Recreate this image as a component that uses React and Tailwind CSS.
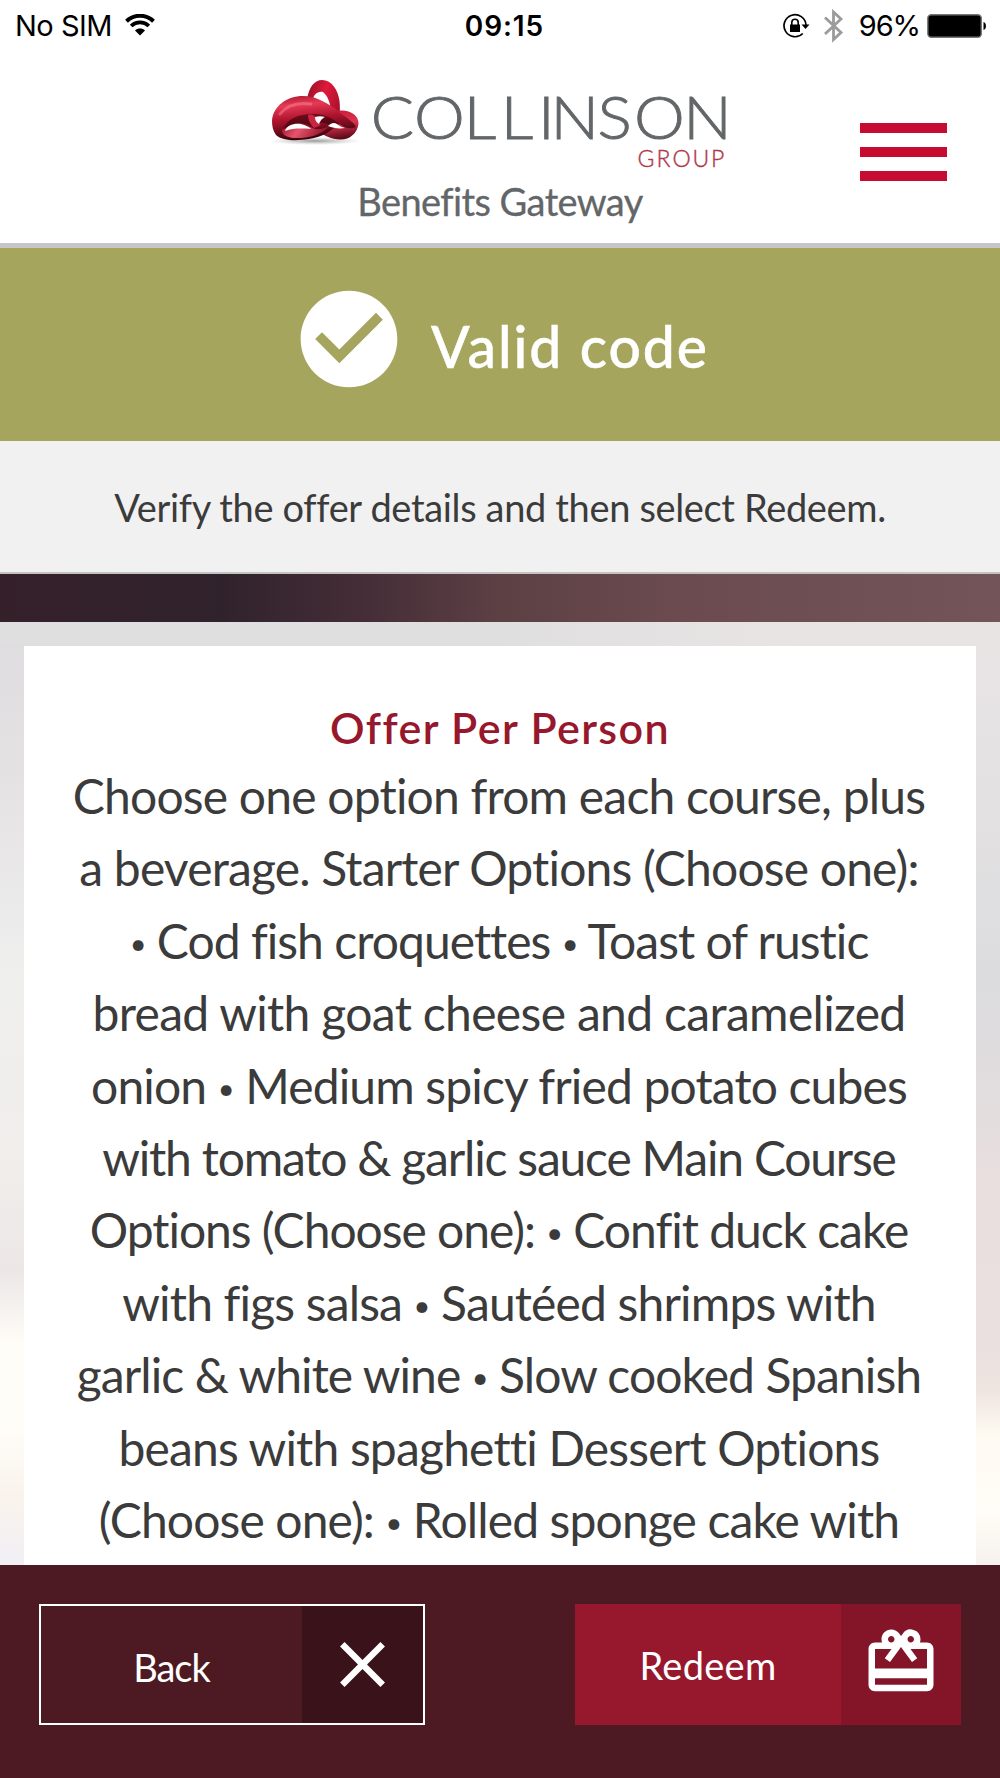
import { MdCheckCircle, MdClose, MdRedeem } from "react-icons/md";

// 1行ごとの文字間隔
const offerLines = [
  { text: "Choose one option from each course, plus", tracking: "tracking-[-0.80px]" },
  { text: "a beverage. Starter Options (Choose one):", tracking: "tracking-[-0.83px]" },
  { text: "• Cod fish croquettes • Toast of rustic", tracking: "tracking-[-0.97px]" },
  { text: "bread with goat cheese and caramelized", tracking: "tracking-[-0.67px]" },
  { text: "onion • Medium spicy fried potato cubes", tracking: "tracking-[-0.85px]" },
  { text: "with tomato & garlic sauce Main Course", tracking: "tracking-[-1.2px]" },
  { text: "Options (Choose one): • Confit duck cake", tracking: "tracking-[-1.03px]" },
  { text: "with figs salsa • Sautéed shrimps with", tracking: "tracking-[-0.84px]" },
  { text: "garlic & white wine • Slow cooked Spanish", tracking: "tracking-[-0.91px]" },
  { text: "beans with spaghetti Dessert Options", tracking: "tracking-[-0.82px]" },
  { text: "(Choose one): • Rolled sponge cake with", tracking: "tracking-[-0.87px]" },
];

const StatusBar = () => (
  <div className="h-[50px] shrink-0 grid grid-cols-3 items-center pl-[15px] pr-[13px] text-black text-[29px] leading-[50px] font-['Inter',sans-serif]">
    <div className="flex items-center gap-[13px]">
      <span className="pt-px tracking-[-0.5px]">No SIM</span>
      <svg width="30" height="22" viewBox="0 0 30 22" className="-mt-0.5" fill="none" stroke="#000">
        <path d="M1.5 7.2a19.5 19.5 0 0 1 27 0" strokeWidth="4" />
        <path d="M6.2 12a12.6 12.6 0 0 1 17.6 0" strokeWidth="3.8" />
        <path d="M15 21.5l-5-5c2.8-2.6 7.2-2.6 10 0z" fill="#000" stroke="none" />
      </svg>
    </div>
    <div className="pt-px pl-[7px] text-center font-semibold text-[28px] tracking-[0.9px]">09:15</div>
    <div className="flex items-center justify-end">
      <svg width="28" height="26" viewBox="0 0 28 26" fill="none" stroke="#000" strokeWidth="1.7">
        <path d="M20.8 20.5A11 11 0 1 1 24 12" />
        <path d="M19.5 11.5h8l-4 4.5z" fill="#000" stroke="none" />
        <rect x="8" y="11.5" width="10" height="7.5" fill="#000" stroke="none" />
        <path d="M9.8 12V9.5a3.2 3.2 0 0 1 6.4 0V12" strokeWidth="1.6" />
      </svg>
      <svg width="20" height="34" viewBox="0 0 20 34" className="ml-[14px] mr-[15px]" fill="none" stroke="#9b9b9b" strokeWidth="2.8">
        <path d="M1 8.5l16 15-7.5 7V3l7.5 7L1 25" />
      </svg>
      <span className="pt-px tracking-[-1.1px]">96%</span>
      <svg width="60" height="24" viewBox="0 0 60 24" className="ml-[7px]">
        <rect x="0.8" y="0.8" width="53.5" height="22.4" rx="3.5" fill="#000" stroke="#777" strokeWidth="1.4" />
        <path d="M56.5 8c3.3 1 3.3 7 0 8z" fill="#000" />
      </svg>
    </div>
  </div>
);

const Logo = () => (
  <svg width="464" height="100" viewBox="0 0 464 100" className="shrink-0 font-['Lato',sans-serif]">
    <defs>
      <linearGradient id="loop" x1="0" y1="0" x2="0.2" y2="1">
        <stop offset="0" stopColor="#a8132b" />
        <stop offset="0.25" stopColor="#e63a56" />
        <stop offset="0.55" stopColor="#b0142e" />
        <stop offset="1" stopColor="#3a040d" />
      </linearGradient>
      <linearGradient id="back" x1="0" y1="0" x2="1" y2="0.6">
        <stop offset="0" stopColor="#8a1024" />
        <stop offset="0.5" stopColor="#e0193a" />
        <stop offset="1" stopColor="#a5122b" />
      </linearGradient>
      <linearGradient id="lobe" x1="0.2" y1="0" x2="0.4" y2="1">
        <stop offset="0" stopColor="#c81c38" />
        <stop offset="0.5" stopColor="#d93550" />
        <stop offset="1" stopColor="#5c0918" />
      </linearGradient>
      <linearGradient id="inner" x1="0" y1="0" x2="1" y2="0.2">
        <stop offset="0" stopColor="#9c1229" />
        <stop offset="0.4" stopColor="#e4556c" />
        <stop offset="1" stopColor="#8c0f25" />
      </linearGradient>
      <radialGradient id="ground">
        <stop offset="0" stopColor="#555" stopOpacity="0.6" />
        <stop offset="1" stopColor="#999" stopOpacity="0" />
      </radialGradient>
    </defs>
    {/* 結び目のマーク */}
    <g transform="translate(-3 0)">
      <ellipse cx="50" cy="67" rx="46" ry="4" fill="url(#ground)" />
      <path
        fill="url(#back)"
        fillRule="evenodd"
        d="M42 26C44 12 50 6 57 6C67 6 73 16 74.5 27C75.500 37 75 45 70 52C62 60 46 58 44 46ZM48 24C50 19 54 17 58 18C63 22 65 29 66 36C60 31 54 27 48 24Z"
      />
      <path fill="url(#lobe)" d="M72 37C84 35 94 41 93.5 50C92 60 84 66 75 65.500C66 65 60 62 54 58L63 48Z" />
      <path
        fill="url(#loop)"
        d="M7 47C8 32 22 22 38 22C52 22 64 30 73 37C80 43 88 47 91 53C84 56 79 53 74 50C66 57 58 63 44 65C32 67 17 67 11 61C8 57 7 52 7 47Z"
      />
      <path fill="#3a040d" fillOpacity="0.65" d="M18 55C22 45 34 40 48 40C58 40 66 43 74 50L66 52C58 47 52 48 46 52C36 47 26 49 18 57Z" />
      <path fill="url(#inner)" d="M17 56C27 49 41 51 50 55C56 56 61 54 65 51C60 58 51 62 41 63.500C29 65 17 64 17 56Z" />
      <path fill="#fff" d="M20 57C22 51 29 49 36 50C41 51 44 53 46 55C37 54.500 28 54 20 57Z" />
      <path fill="#c92541" d="M43 41C46 40 48 41 50 42C51 46 53 49 56 51L49 54C45 50 43 46 43 41Z" />
      <path fill="#fff" d="M50 43C53 42 57 42 60 43C56 45 55 48 54 50C51 48 50 46 50 43Z" />
      <path fill="#fff" d="M63 52C66 49 69 48 72 50C74 52 77 53 80 54C74 55 68 54 63 52Z" />
      <path d="M15 40C22 31 33 28 46 30" fill="none" stroke="#ff8a9c" strokeOpacity="0.45" strokeWidth="3" strokeLinecap="round" />
    </g>
    <text
      transform="scale(1.07 1)"
      y="65"
      x="96 136.500 183 217.500 252.300 264 308 342 388"
      fill="#636668"
      stroke="#636668"
      strokeWidth="0.9"
      fontSize="60"
      fontWeight="300"
    >
      COLLINSON
    </text>
    <text y="93" x="369.500 388.500 404.500 424.500 443" fill="#b0394c" stroke="#b0394c" strokeWidth="0.400" fontSize="23" fontWeight="300">
      GROUP
    </text>
  </svg>
);

const Header = () => (
  <header className="h-[198px] shrink-0 flex border-b-[5px] border-[#c5c6c6]">
    <div className="w-[265px]" />
    <div className="w-[470px] pt-6 flex flex-col items-center">
      <Logo />
      <p className="-mt-[3px] w-[470px] h-[60px] text-center text-[38px] leading-[60px] text-[#636668] tracking-[-0.6px] [-webkit-text-stroke:0.3px_#636668]">
        Benefits Gateway
      </p>
    </div>
    <button className="ml-[125px] mt-[73px] w-[87px] flex flex-col gap-[14px]">
      <span className="block h-[10px] w-full bg-[#c60c30]" />
      <span className="block h-[10px] w-full bg-[#c60c30]" />
      <span className="block h-[10px] w-full bg-[#c60c30]" />
    </button>
  </header>
);

const OfferLine = ({ text, tracking }) => (
  <p className={`whitespace-nowrap ${tracking}`}>
    {text.split("•").map((part, i) => (
      <span key={i}>
        {i > 0 && <span className="text-[29px] align-[5px] leading-none">•</span>}
        {part}
      </span>
    ))}
  </p>
);

export default function App() {
  return (
    <div className="w-[1000px] h-[1778px] flex flex-col overflow-hidden bg-white font-['Lato',sans-serif] text-[#3b3b3b]">
      <StatusBar />
      <Header />

      <div className="h-[193px] shrink-0 flex bg-[#a5a55d] text-white">
        <MdCheckCircle className="ml-[291px] mt-[33px] size-[116px] shrink-0" />
        <h1 className="ml-[24px] mt-[62px] text-[57px] leading-[72px] font-medium tracking-[1.95px] whitespace-nowrap [-webkit-text-stroke:0.5px_white]">
          Valid code
        </h1>
      </div>

      <div className="h-[133px] shrink-0 bg-[#f1f1f1] border-b-2 border-[#c3c3c3] text-center text-[38px] leading-[132px] tracking-[-0.35px]">
        Verify the offer details and then select Redeem.
      </div>

      <div className="h-[48px] shrink-0 bg-[linear-gradient(90deg,#35202a_0%,#30222c_22%,#442d37_36%,#5c4044_50%,#6b4b50_68%,#725459_100%)]" />

      {/* 特典の内容 */}
      <main className="h-[943px] shrink-0 px-6 pt-6 overflow-hidden bg-[radial-gradient(ellipse_90px_100px_at_10px_770px,#fffdf8_50%,transparent),radial-gradient(ellipse_90px_100px_at_1000px_880px,#fffcf5_50%,transparent),linear-gradient(90deg,transparent_50%,#e8e4e4_80%)] bg-[#e0dfe0]">
        <div className="flex h-full">
          <div className="-ml-6 w-6 shrink-0 bg-[linear-gradient(180deg,#dfdddf_0%,#e4e1e3_13%,#efefee_36%,#f1eeec_55%,#ece7e6_68%,#fffdf8_76%,#fffdf8_85%,#f9f2ec_93%,#f1f0f6_100%)]" />
          <section className="flex-1 h-[940px] bg-white pt-[51px] text-center">
            <h2 className="h-[63px] text-[43px] leading-[61px] font-semibold text-[#97172d] tracking-[1.4px]">
              Offer Per Person
            </h2>
            <div className="pr-[2px] text-[48px] leading-[72.4px]">
              {offerLines.map((line) => (
                <OfferLine key={line.text} text={line.text} tracking={line.tracking} />
              ))}
            </div>
          </section>
          <div className="-mr-6 w-6 shrink-0 bg-[linear-gradient(180deg,#e8e4e5_0%,#e3e1e2_18%,#dcdcde_36%,#e0dcde_46%,#e8dfde_58%,#eae0df_76%,#eee5e1_81%,#fffaf2_86%,#fffdf7_94%,#f6f1ec_100%)]" />
        </div>
      </main>

      <footer className="h-[213px] shrink-0 flex items-start justify-between px-[39px] pt-[39px] bg-[#4d1a23] text-white text-[38px]">
        <button className="w-[386px] h-[121px] flex border-2 border-white">
          <span className="w-[261px] h-full pt-[3px] leading-[117px] tracking-[-1px]">Back</span>
          <span className="flex-1 h-full flex items-center justify-center bg-[#39121a]">
            <MdClose className="size-[77px]" />
          </span>
        </button>
        <button className="w-[386px] h-[121px] flex bg-[#97172d]">
          <span className="w-[266px] h-full pt-px leading-[121px] tracking-[0.3px]">Redeem</span>
          <span className="flex-1 h-full pt-[19px] flex justify-center bg-[#841528]">
            <MdRedeem className="size-[78px]" />
          </span>
        </button>
      </footer>
    </div>
  );
}
